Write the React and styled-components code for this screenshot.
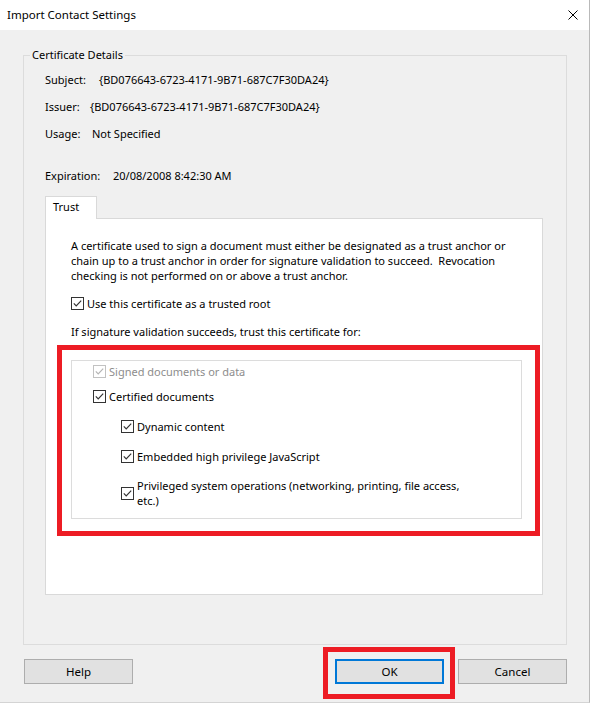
import styled, { createGlobalStyle } from 'styled-components'

const GlobalStyle = createGlobalStyle`
  html, body {
    margin: 0;
    padding: 0;
    background: #ffffff;
  }
  body {
    font-family: "Segoe UI", "Noto Sans", "Liberation Sans", sans-serif;
    font-size: 11px;
    color: #000000;
  }
`

const Window = styled.div`
  background: #f0f0f0;
  border-bottom: 1px solid #d4d4d4;
  border-right: 1px solid #b9b9b9;
  box-sizing: border-box;
  display: flex;
  flex-direction: column;
  height: 703px;
  width: 590px;
`

const TitleBar = styled.div`
  align-items: center;
  background: #ffffff;
  display: flex;
  flex-shrink: 0;
  height: 30px;
  justify-content: space-between;
  padding-left: 7px;
`

const Title = styled.span`
  font-size: 11.5px;
  line-height: 16px;
`

const CloseButton = styled.div`
  align-items: center;
  display: flex;
  height: 30px;
  justify-content: center;
  width: 32px;
`

const Body = styled.div`
  display: flex;
  flex-direction: column;
  padding: 17px 22px 0 23px;
`

const GroupBox = styled.fieldset`
  border: 1px solid #dcdcdc;
  box-sizing: border-box;
  height: 598px;
  margin: 0;
  min-width: 0;
  padding: 0 0 0 6px;
  width: 544px;
`

const Legend = styled.legend`
  line-height: 16px;
  padding: 0 2px;
`

const Details = styled.div`
  padding-left: 15px;
`

const DetailRow = styled.div`
  display: flex;
  line-height: 16px;
  margin-top: ${p => p.$gap}px;
`

const DetailLabel = styled.span`
  width: ${p => p.$w}px;
`

const TabStrip = styled.div`
  display: flex;
  margin: 12px 0 0 15px;
`

const Tab = styled.div`
  background: #ffffff;
  border: 1px solid #d9d9d9;
  border-bottom: none;
  box-sizing: border-box;
  height: 23px;
  line-height: 20px;
  margin-bottom: -1px;
  padding-left: 7px;
  position: relative;
  width: 52px;
`

const TabPanel = styled.div`
  background: #ffffff;
  border: 1px solid #d9d9d9;
  box-sizing: border-box;
  height: 377px;
  margin-left: 15px;
  padding: 19px 0 0 11px;
  width: 498px;
`

const TrustText = styled.div`
  padding-left: 14px;
`

const Paragraph = styled.p`
  line-height: 15px;
  margin: 0;
  white-space: pre;
`

const CheckRow = styled.label`
  align-items: center;
  color: ${p => (p.$disabled ? '#8d8d8d' : '#000000')};
  display: flex;
  gap: 3px;
  line-height: 15px;
  margin-left: ${p => p.$indent || 0}px;
  margin-top: ${p => p.$gap || 0}px;
`

const Box = styled.span`
  align-items: center;
  background: #ffffff;
  border: 1px solid ${p => (p.$disabled ? '#c2c2c2' : '#333333')};
  box-sizing: border-box;
  display: inline-flex;
  flex-shrink: 0;
  height: 13px;
  justify-content: center;
  width: 13px;
`

const Prompt = styled.div`
  line-height: 15px;
  margin-top: 13px;
`

const RedFrame = styled.div`
  border: 5px solid #ed1c24;
  box-sizing: border-box;
  margin-top: 6px;
  padding: 10px 13px 12px 9px;
  width: 483px;
`

const InnerBox = styled.div`
  border: 1px solid #dcdcdc;
  box-sizing: border-box;
  height: 159px;
  padding: 3px 0 0 21px;
`

const ButtonRow = styled.div`
  align-items: flex-start;
  display: flex;
  margin-top: 2px;
`

const Button = styled.button`
  background: #e1e1e1;
  border: ${p => (p.$default ? '2px solid #0078d7' : '1px solid #adadad')};
  box-sizing: border-box;
  color: #000000;
  font-family: inherit;
  font-size: 11.5px;
  height: 25px;
  margin-top: ${p => p.$top || 0}px;
  margin-left: ${p => p.$left || 0}px;
  padding: 0;
  width: 109px;
`

const OkFrame = styled.div`
  border: 5px solid #ed1c24;
  margin-left: auto;
  padding: 7px 6px 10px 7px;
`

const Check = ({ disabled }) => (
  <Box $disabled={disabled}>
    <svg width="11" height="11" viewBox="0 0 11 11">
      <path
        d="M1.8 5.4 L4.2 7.8 L9.2 2.6"
        fill="none"
        stroke={disabled ? '#b4b4b4' : '#333333'}
        strokeWidth="1.2"
      />
    </svg>
  </Box>
)

const details = [
  { label: 'Subject:', w: 54, value: '{BD076643-6723-4171-9B71-687C7F30DA24}', gap: 9 },
  { label: 'Issuer:', w: 45, value: '{BD076643-6723-4171-9B71-687C7F30DA24}', gap: 11 },
  { label: 'Usage:', w: 47, value: 'Not Specified', gap: 11 },
  { label: 'Expiration:', w: 68, value: '20/08/2008 8:42:30 AM', gap: 26 },
]

export default function App() {
  return (
    <>
      <GlobalStyle />
      <Window>
        <TitleBar>
          <Title>Import Contact Settings</Title>
          <CloseButton>
            <svg width="10" height="10" viewBox="0 0 10 10">
              <path d="M0.5 0.5 L9.5 9.5 M9.5 0.5 L0.5 9.5" stroke="#000" strokeWidth="1" />
            </svg>
          </CloseButton>
        </TitleBar>
        <Body>
          <GroupBox>
            <Legend>Certificate Details</Legend>
            <Details>
              {details.map(d => (
                <DetailRow key={d.label} $gap={d.gap}>
                  <DetailLabel $w={d.w}>{d.label}</DetailLabel>
                  <span>{d.value}</span>
                </DetailRow>
              ))}
            </Details>
            <TabStrip>
              <Tab>Trust</Tab>
            </TabStrip>
            <TabPanel>
              <TrustText>
                <Paragraph>
                  {'A certificate used to sign a document must either be designated as a trust anchor or\n' +
                    'chain up to a trust anchor in order for signature validation to succeed.  Revocation\n' +
                    'checking is not performed on or above a trust anchor.'}
                </Paragraph>
                <CheckRow $gap={13}>
                  <Check />
                  Use this certificate as a trusted root
                </CheckRow>
                <Prompt>If signature validation succeeds, trust this certificate for:</Prompt>
              </TrustText>
              <RedFrame>
                <InnerBox>
                  <CheckRow $disabled>
                    <Check disabled />
                    Signed documents or data
                  </CheckRow>
                  <CheckRow $gap={10}>
                    <Check />
                    Certified documents
                  </CheckRow>
                  <CheckRow $gap={15} $indent={28}>
                    <Check />
                    Dynamic content
                  </CheckRow>
                  <CheckRow $gap={15} $indent={28}>
                    <Check />
                    Embedded high privilege JavaScript
                  </CheckRow>
                  <CheckRow $gap={14} $indent={28}>
                    <Check />
                    <span>
                      Privileged system operations (networking, printing, file access,
                      <br />
                      etc.)
                    </span>
                  </CheckRow>
                </InnerBox>
              </RedFrame>
            </TabPanel>
          </GroupBox>
          <ButtonRow>
            <Button $top={12} $left={1}>Help</Button>
            <OkFrame>
              <Button $default>OK</Button>
            </OkFrame>
            <Button $top={12} $left={3}>Cancel</Button>
          </ButtonRow>
        </Body>
      </Window>
    </>
  )
}
